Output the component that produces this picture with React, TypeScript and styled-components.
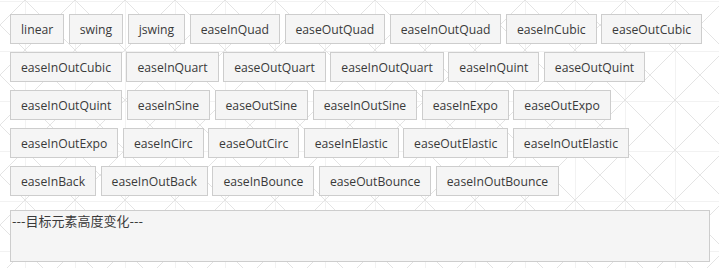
import React from 'react';
import styled, { createGlobalStyle } from 'styled-components';

const ROWS = [
  ['linear', 'swing', 'jswing', 'easeInQuad', 'easeOutQuad', 'easeInOutQuad', 'easeInCubic', 'easeOutCubic'],
  ['easeInOutCubic', 'easeInQuart', 'easeOutQuart', 'easeInOutQuart', 'easeInQuint', 'easeOutQuint'],
  ['easeInOutQuint', 'easeInSine', 'easeOutSine', 'easeInOutSine', 'easeInExpo', 'easeOutExpo'],
  ['easeInOutExpo', 'easeInCirc', 'easeOutCirc', 'easeInElastic', 'easeOutElastic', 'easeInOutElastic'],
  ['easeInBack', 'easeInOutBack', 'easeInBounce', 'easeOutBounce', 'easeInOutBounce'],
];

const GlobalStyle = createGlobalStyle`
  html, body {
    margin: 0;
    padding: 0;
  }
  body {
    font-family: 'Open Sans', 'Noto Sans CJK SC', sans-serif;
    color: #333;
    background-color: #fff;
    /* faint grid with diagonal diamonds, 50px tiles */
    background-image:
      linear-gradient(45deg, transparent calc(50% - 0.6px), #e4e4e4 50%, transparent calc(50% + 0.6px)),
      linear-gradient(-45deg, transparent calc(50% - 0.6px), #e4e4e4 50%, transparent calc(50% + 0.6px)),
      linear-gradient(90deg, #f2f2f2 1px, transparent 1px),
      linear-gradient(0deg, transparent 49px, #f2f2f2 49px);
    background-size: 50px 50px;
    background-position: 25px 0, 25px 0, 25px 0, 25px 1px;
    min-height: 268px;
  }
`;

const Page = styled.div`
  padding: 14px 10px 0 10px;
`;

const Buttons = styled.div`
  display: flex;
  flex-direction: column;
  gap: 8px;
`;

const Row = styled.div`
  display: flex;
  gap: 4.5px;
`;

const EaseButton = styled.button`
  height: 30px;
  padding: 0 10px;
  font-family: 'Open Sans', 'Noto Sans CJK SC', sans-serif;
  font-size: 12.2px;
  color: #3a3a3a;
  background: #f5f5f5;
  border: 1px solid #cdcdcd;
  border-radius: 0;
  cursor: pointer;
`;

const Target = styled.div`
  margin-top: 14px;
  width: 700px;
  height: 52px;
  box-sizing: border-box;
  border: 1px solid #cdcdcd;
  background: #f5f5f5;
  padding: 1px;
  font-family: 'Noto Sans CJK SC', sans-serif;
  font-size: 13px;
  line-height: 17px;
  color: #3a3a3a;
`;

export default function App() {
  return (
    <Page>
      <GlobalStyle />
      <Buttons>
        {ROWS.map((row, i) => (
          <Row key={i}>
            {row.map(name => (
              <EaseButton key={name}>{name}</EaseButton>
            ))}
          </Row>
        ))}
      </Buttons>
      <Target>---目标元素高度变化---</Target>
    </Page>
  );
}
